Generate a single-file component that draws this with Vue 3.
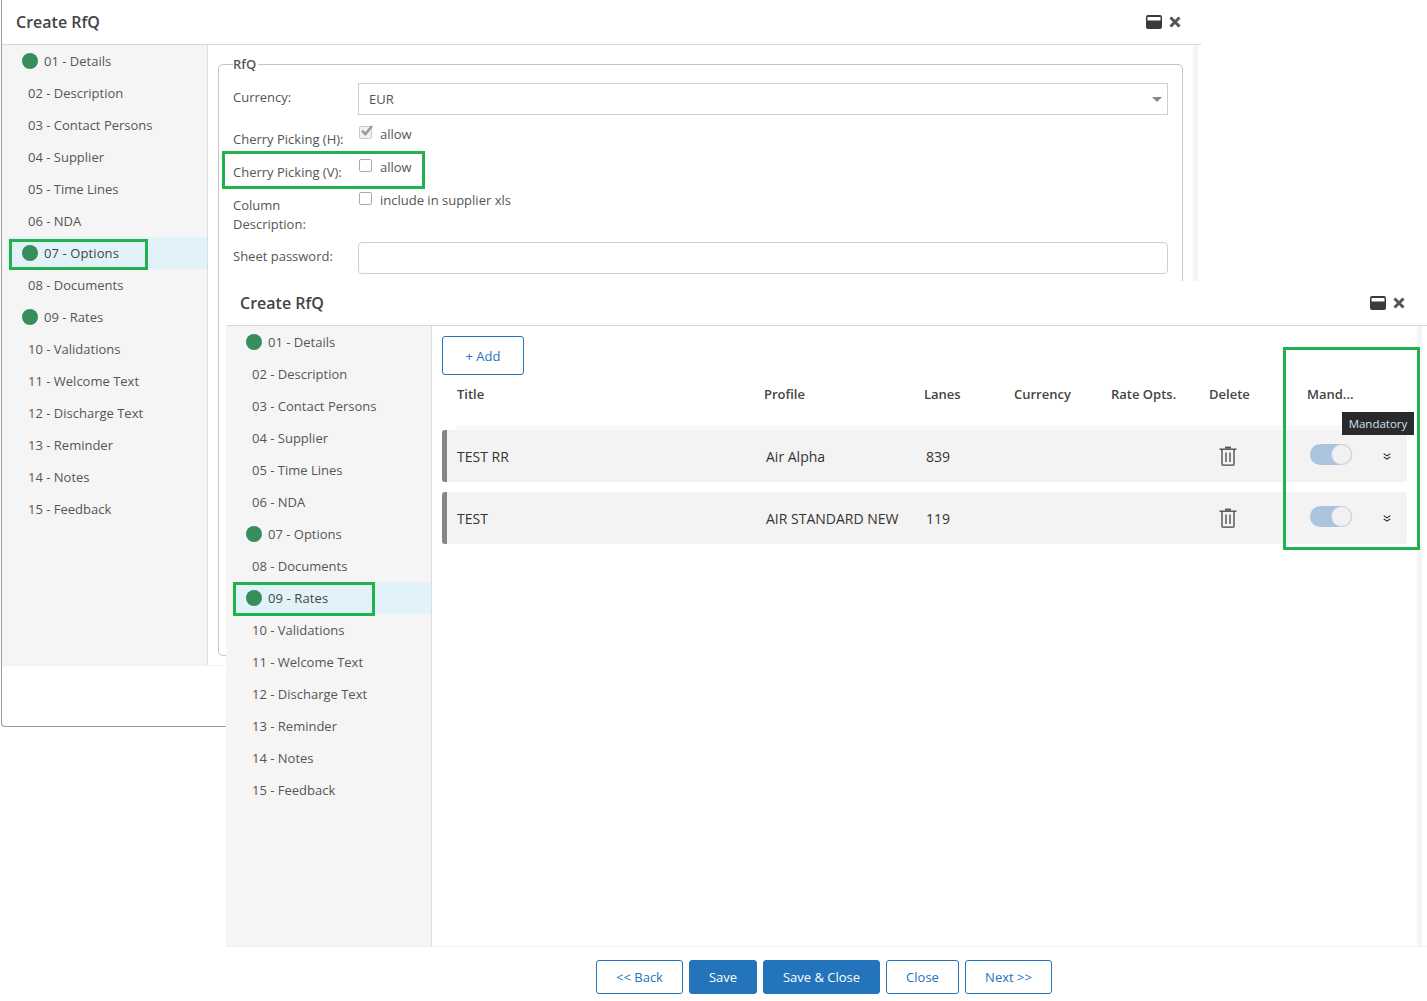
<script setup>
const steps = [
  { label: "01 - Details", done: true },
  { label: "02 - Description" },
  { label: "03 - Contact Persons" },
  { label: "04 - Supplier" },
  { label: "05 - Time Lines" },
  { label: "06 - NDA" },
  { label: "07 - Options", done: true },
  { label: "08 - Documents" },
  { label: "09 - Rates", done: true },
  { label: "10 - Validations" },
  { label: "11 - Welcome Text" },
  { label: "12 - Discharge Text" },
  { label: "13 - Reminder" },
  { label: "14 - Notes" },
  { label: "15 - Feedback" },
];

const rows = [
  { title: "TEST RR", profile: "Air Alpha", lanes: "839" },
  { title: "TEST", profile: "AIR STANDARD NEW", lanes: "119" },
];

const buttons = [
  { label: "<< Back", width: 87 },
  { label: "Save", width: 68, primary: true },
  { label: "Save & Close", width: 117, primary: true },
  { label: "Close", width: 73 },
  { label: "Next >>", width: 87 },
];
</script>

<template>
  <div class="canvas">
    <!-- back window -->
    <section class="win win-back">
      <header class="win-head">
        <h2>Create RfQ</h2>
        <div class="win-icons">
          <svg width="16" height="14" viewBox="0 0 16 14"><path fill="#3a3a3a" fill-rule="evenodd" d="M2 0h12a2 2 0 0 1 2 2v10a2 2 0 0 1-2 2H2a2 2 0 0 1-2-2V2a2 2 0 0 1 2-2zM1.5 2v3.5h13V2z" /></svg>
          <svg width="12" height="12" viewBox="0 0 12 12"><path stroke="#555" stroke-width="3" d="M1.5 1.5l9 9M10.5 1.5l-9 9" /></svg>
        </div>
      </header>
      <div class="win-body back-body">
        <nav class="side back-side">
          <div v-for="(s, i) in steps" :key="s.label" class="step" :class="{ active: i === 6, done: s.done }">
            <span v-if="s.done" class="dot"></span>{{ s.label }}
          </div>
        </nav>
        <div class="back-main">
          <fieldset class="rfq">
            <legend>RfQ</legend>
            <div class="form-row row-currency">
              <label>Currency:</label>
              <div class="select">EUR<span class="caret"></span></div>
            </div>
            <div class="form-row row-h">
              <label>Cherry Picking (H):</label>
              <span class="check-wrap">
                <span class="box checked"><svg width="15" height="14" viewBox="0 0 15 14"><path fill="none" stroke="#8f9aa5" stroke-width="2.4" d="M3 6.5l3.4 3.6L13 2" /></svg></span>allow
              </span>
            </div>
            <div class="form-row row-v">
              <label>Cherry Picking (V):</label>
              <span class="check-wrap"><span class="box"></span>allow</span>
            </div>
            <div class="form-row row-col">
              <label>Column<br />Description:</label>
              <span class="check-wrap"><span class="box"></span>include in supplier xls</span>
            </div>
            <div class="form-row row-pass">
              <label>Sheet password:</label>
              <div class="text-input"></div>
            </div>
          </fieldset>
          <div class="back-scroll"></div>
        </div>
      </div>
    </section>

    <!-- front window -->
    <section class="win win-front">
      <header class="win-head">
        <h2>Create RfQ</h2>
        <div class="win-icons">
          <svg width="16" height="14" viewBox="0 0 16 14"><path fill="#3a3a3a" fill-rule="evenodd" d="M2 0h12a2 2 0 0 1 2 2v10a2 2 0 0 1-2 2H2a2 2 0 0 1-2-2V2a2 2 0 0 1 2-2zM1.5 2v3.5h13V2z" /></svg>
          <svg width="12" height="12" viewBox="0 0 12 12"><path stroke="#555" stroke-width="3" d="M1.5 1.5l9 9M10.5 1.5l-9 9" /></svg>
        </div>
      </header>
      <div class="win-body front-body">
        <nav class="side">
          <div v-for="(s, i) in steps" :key="s.label" class="step" :class="{ active: i === 8, done: s.done }">
            <span v-if="s.done" class="dot"></span>{{ s.label }}
          </div>
        </nav>
        <div class="front-main">
          <button class="add">+ Add</button>
          <div class="t-head">
            <span class="c-title">Title</span>
            <span class="c-profile">Profile</span>
            <span class="c-lanes">Lanes</span>
            <span class="c-currency">Currency</span>
            <span class="c-opts">Rate Opts.</span>
            <span class="c-delete">Delete</span>
            <span class="c-mand">Mand...</span>
          </div>
          <div class="t-rule"></div>
          <div v-for="r in rows" :key="r.title" class="t-row">
            <span class="c-title">{{ r.title }}</span>
            <span class="c-profile">{{ r.profile }}</span>
            <span class="c-lanes">{{ r.lanes }}</span>
            <span class="c-currency"></span>
            <span class="c-opts"></span>
            <span class="c-delete trash">
              <svg width="18" height="20" viewBox="0 0 18 20" fill="none" stroke="#444" stroke-width="1.3">
                <path d="M0.5 3.2h17" />
                <path fill="#555" stroke="none" d="M6 0.6h6v2H6z" />
                <path d="M3 3.2v15a1 1 0 0 0 1 1h10a1 1 0 0 0 1-1v-15" />
                <path d="M7 6.5v9.5M11 6.5v9.5" />
              </svg>
            </span>
            <span class="c-mand">
              <span class="toggle"><span class="knob"></span></span>
            </span>
            <svg class="chev" width="8" height="7" viewBox="0 0 8 7" fill="none" stroke="#222" stroke-width="1.1"><path d="M0.7 0.6l3.3 2.3 3.3-2.3M0.7 3.9l3.3 2.3 3.3-2.3" /></svg>
          </div>
        </div>
      </div>
      <div class="front-scroll"></div>
    </section>

    <footer class="foot">
      <button v-for="b in buttons" :key="b.label" class="btn" :class="{ primary: b.primary }" :style="{ width: b.width + 'px' }">{{ b.label }}</button>
    </footer>

    <div class="tooltip">Mandatory</div>

    <!-- annotation frames -->
    <div class="mark m1"></div>
    <div class="mark m2"></div>
    <div class="mark m3"></div>
    <div class="mark m4"></div>
  </div>
</template>

<style>
html,
body {
  margin: 0;
  background: #fff;
}
</style>

<style scoped>
.canvas {
  position: relative;
  width: 1427px;
  height: 1001px;
  overflow: hidden;
  background: #fff;
  font-family: "Open Sans", sans-serif;
  font-size: 13px;
  color: #555;
}

.win {
  position: absolute;
  background: #fff;
  box-sizing: border-box;
}

.win-back {
  left: 1px;
  top: 0;
  width: 1200px;
  height: 727px;
  border-left: 1px solid #9a9a9a;
  border-bottom: 1px solid #9a9a9a;
  border-bottom-left-radius: 4px;
}

.win-front {
  left: 226px;
  top: 281px;
  width: 1201px;
  height: 666px;
  display: flex;
  flex-direction: column;
  border-bottom: 1px solid #f1f1f1;
}

.win-head {
  height: 44px;
  flex: none;
  box-sizing: content-box;
  border-bottom: 1px solid #d8d8d8;
  display: flex;
  align-items: center;
  justify-content: space-between;
}

.win-back .win-head {
  padding: 0 20px 0 14px;
}

.win-front .win-head {
  padding: 0 22px 0 14px;
}

.win-head h2 {
  margin: 0;
  font-size: 16px;
  font-weight: 600;
  color: #444;
}

.win-icons {
  display: flex;
  align-items: center;
  gap: 7px;
}

.win-body {
  display: flex;
}

.back-body {
  height: 620px;
  border-bottom: 1px solid #f1f1f1;
}

.front-body {
  flex: 1;
  width: 1195px;
}

.side {
  width: 205px;
  flex: none;
  background: #f5f5f5;
  border-right: 1px solid #dcdcdc;
}

.back-side {
  padding-left: 0;
}

.step {
  height: 32px;
  display: flex;
  align-items: center;
  padding-left: 26px;
  color: #555;
}

.step.done {
  padding-left: 20px;
}

.step.active {
  background: #e1f3f8;
  margin-left: 5px;
  padding-left: 15px;
  color: #444;
  letter-spacing: 0.1px;
}

.front-body .step.active {
  margin-left: 7px;
  padding-left: 13px;
}

.dot {
  width: 16px;
  height: 16px;
  border-radius: 50%;
  background: #388e5a;
  margin-right: 6px;
}

.back-main {
  flex: 1;
  position: relative;
  display: flex;
  padding: 11px 0 0 10px;
}

.rfq {
  margin: 0;
  padding: 0 14px 0 14px;
  width: 965px;
  height: 600px;
  box-sizing: border-box;
  border: 1px solid #c4c4c4;
  border-radius: 5px;
  min-width: 0;
}

.rfq legend {
  padding: 0 2px 0 0;
  font-weight: 600;
  color: #555;
  line-height: 17px;
  height: 17px;
}

.form-row {
  display: flex;
  color: #555;
}

.form-row label {
  width: 125px;
  flex: none;
  line-height: 22px;
}

.row-currency {
  margin-top: 10px;
  height: 32px;
}

.row-currency label {
  margin-top: 3px;
}

.select {
  flex: 1;
  height: 32px;
  box-sizing: border-box;
  border: 1px solid #cfcfcf;
  padding-left: 10px;
  line-height: 31px;
  position: relative;
}

.caret {
  position: absolute;
  right: 5px;
  top: 13px;
  border-left: 5px solid transparent;
  border-right: 5px solid transparent;
  border-top: 5px solid #888;
}

.row-h {
  margin-top: 2px;
  height: 33px;
}

.row-h label {
  margin-top: 11px;
}

.row-v {
  height: 33px;
}

.row-v label {
  margin-top: 11px;
}

.row-col {
  height: 53px;
}

.row-col label {
  margin-top: 13px;
  line-height: 19px;
}

.row-pass {
  height: 32px;
  margin-top: 6px;
}

.row-pass label {
  margin-top: 3px;
}

.check-wrap {
  display: flex;
  align-items: center;
  height: 22px;
  margin-top: 6px;
  color: #555;
}

.box {
  width: 11px;
  height: 11px;
  border: 1px solid #aaa;
  border-radius: 2px;
  margin: -3px 8px 0 1px;
  position: relative;
  background: #fff;
}

.box.checked {
  background: #f2f2f2;
  border-color: #c8c8c8;
}

.box svg {
  position: absolute;
  left: -1px;
  top: -3px;
}

.text-input {
  flex: 1;
  height: 32px;
  box-sizing: border-box;
  border: 1px solid #cfcfcf;
  border-radius: 4px;
}

.back-scroll {
  position: absolute;
  left: 985px;
  top: 0;
  width: 5px;
  height: 100%;
  background: #f5f5f5;
}

.front-main {
  flex: 1;
  min-width: 0;
  padding: 10px 0 0 10px;
}

.add {
  display: block;
  width: 82px;
  height: 39px;
  box-sizing: border-box;
  border: 1px solid #2474bb;
  border-radius: 3px;
  background: #fff;
  color: #2474bb;
  font: inherit;
  padding: 0;
}

.t-head,
.t-row {
  display: flex;
  align-items: center;
}

.t-head {
  height: 38px;
  font-weight: 600;
  color: #444;
}

.t-rule {
  height: 5px;
  margin: 12px 14px 0 15px;
  background: #f9f9f9;
}

.t-row {
  width: 965px;
  height: 52px;
  box-sizing: border-box;
  background: #f3f3f3;
  border-left: 5px solid #868686;
  border-radius: 3px;
  position: relative;
  color: #333;
  font-size: 14px;
  margin-bottom: 10px;
}

.c-title {
  width: 322px;
  padding-left: 15px;
  flex: none;
  box-sizing: border-box;
}

.t-row .c-title {
  width: 319px;
  padding-left: 10px;
}

.c-profile {
  width: 160px;
  flex: none;
}

.c-lanes {
  width: 90px;
  flex: none;
}

.c-currency {
  width: 97px;
  flex: none;
}

.c-opts {
  width: 98px;
  flex: none;
}

.c-delete {
  width: 98px;
  flex: none;
}

.trash {
  display: flex;
  padding-left: 8px;
  box-sizing: border-box;
}

.c-mand {
  width: 70px;
  flex: none;
}

.toggle {
  display: block;
  width: 42px;
  height: 21px;
  background: #a9c4dc;
  border-radius: 11px;
  position: relative;
  margin: -4px 0 0 1px;
}

.knob {
  position: absolute;
  right: 0;
  top: 0;
  width: 19px;
  height: 19px;
  border: 1px solid #c5d6e5;
  border-radius: 50%;
  background: #f1f1f1;
}

.chev {
  position: absolute;
  left: 936px;
  top: 23px;
}

.front-scroll {
  position: absolute;
  right: 5px;
  top: 45px;
  bottom: 0;
  width: 5px;
  background: #f5f5f5;
}

.foot {
  position: absolute;
  left: 596px;
  top: 960px;
  display: flex;
  gap: 6px;
}

.btn {
  height: 34px;
  box-sizing: border-box;
  border: 1px solid #2474bb;
  border-radius: 3px;
  background: #fff;
  color: #2474bb;
  font: inherit;
  padding: 0;
}

.btn.primary {
  background: #2474bb;
  color: #fff;
}

.tooltip {
  position: absolute;
  left: 1342px;
  top: 412px;
  width: 72px;
  height: 23px;
  background: #2a2a2c;
  color: #cfe0f0;
  font-size: 11.5px;
  line-height: 23px;
  text-align: center;
}

.mark {
  position: absolute;
  box-sizing: border-box;
  border: 3px solid #22b14c;
  pointer-events: none;
}

.m1 {
  left: 9px;
  top: 239px;
  width: 139px;
  height: 31px;
}

.m2 {
  left: 222px;
  top: 151px;
  width: 203px;
  height: 38px;
}

.m3 {
  left: 233px;
  top: 582px;
  width: 142px;
  height: 34px;
}

.m4 {
  left: 1283px;
  top: 347px;
  width: 137px;
  height: 203px;
}
</style>
